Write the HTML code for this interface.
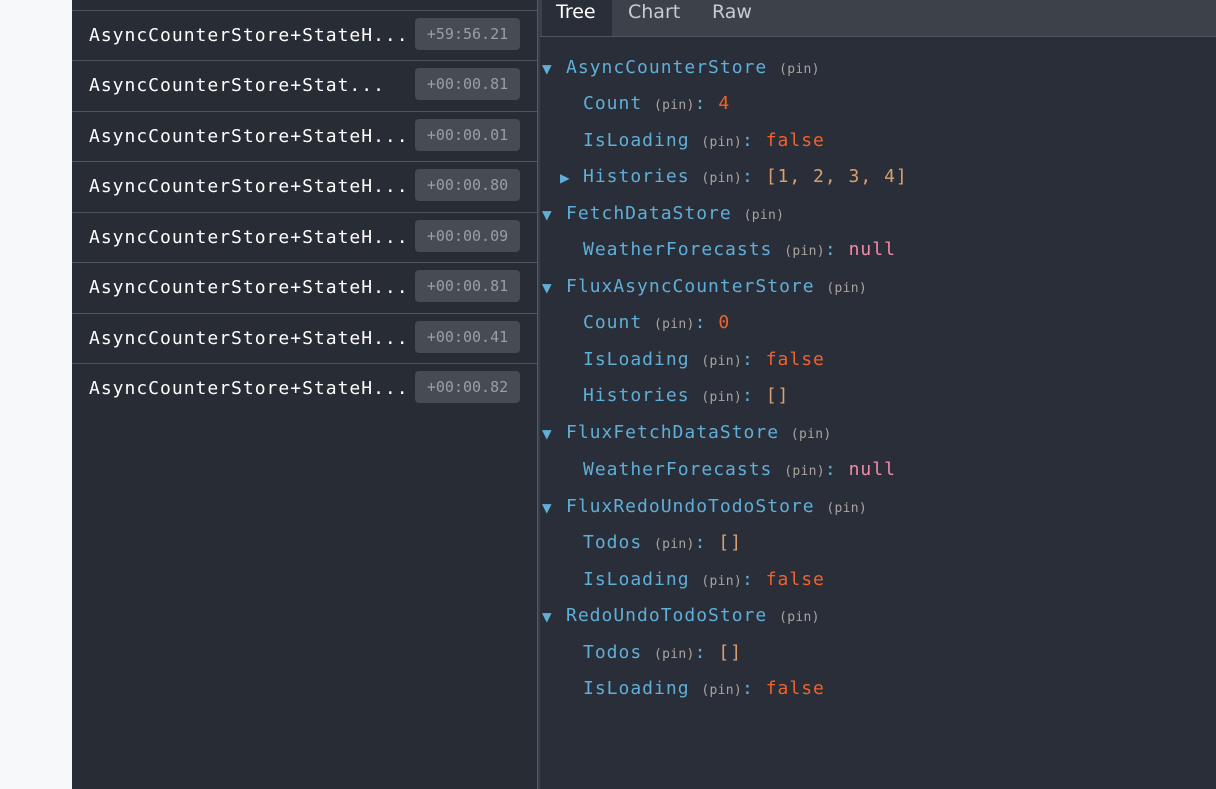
<!DOCTYPE html>
<html><head><style>
*{margin:0;padding:0;box-sizing:border-box}
body{width:1216px;height:789px;overflow:hidden;background:#f7f8fa;position:relative;font-family:"DejaVu Sans Mono","Liberation Mono",monospace}
#left{position:absolute;left:72px;top:0;width:465px;height:789px;background:#282c35}
.row{position:absolute;left:0;width:465px;height:50px;border-top:1px solid #4e535c}
.row .t{position:absolute;left:17px;top:14px;font-size:18px;letter-spacing:1px;color:#fff}
.row .b{position:absolute;left:343px;top:7px;width:105px;height:32px;background:#464b54;border-radius:4px;color:#9a9ea6;font-size:15px;text-align:center;line-height:32px}
#div{position:absolute;left:537px;top:0;width:3px;height:789px;background:#3a3e46;border-left:1px solid #555a63}
#right{position:absolute;left:540px;top:0;width:676px;height:789px;background:#2a2e38}
#tabs{position:absolute;left:0;top:0;width:676px;height:37px;background:#3c414a;border-bottom:1px solid #50555e;font-family:"DejaVu Sans","Liberation Sans",sans-serif;font-size:19px;color:#c8ccd2}
#tabs span{position:absolute;top:1px}
#tree{position:absolute;left:0;top:1px;font-size:18px;letter-spacing:1px}
.l{position:absolute;white-space:nowrap;color:#5fafd9;line-height:20px}
.l small{font-size:13px;letter-spacing:0.3px;color:#a8a4a0}
.o{color:#f0622d}.n{color:#f48aa8}.a{color:#d8a070}
.ar{position:absolute;font-size:16px;color:#5fafd9;line-height:20px}
</style></head><body>
<div id="left">
<div class="row" style="top:10px"><span class="t">AsyncCounterStore+StateH...</span><span class="b">+59:56.21</span></div>
<div class="row" style="top:60px"><span class="t">AsyncCounterStore+Stat...</span><span class="b">+00:00.81</span></div>
<div class="row" style="top:111px"><span class="t">AsyncCounterStore+StateH...</span><span class="b">+00:00.01</span></div>
<div class="row" style="top:161px"><span class="t">AsyncCounterStore+StateH...</span><span class="b">+00:00.80</span></div>
<div class="row" style="top:212px"><span class="t">AsyncCounterStore+StateH...</span><span class="b">+00:00.09</span></div>
<div class="row" style="top:262px"><span class="t">AsyncCounterStore+StateH...</span><span class="b">+00:00.81</span></div>
<div class="row" style="top:313px"><span class="t">AsyncCounterStore+StateH...</span><span class="b">+00:00.41</span></div>
<div class="row" style="top:363px"><span class="t">AsyncCounterStore+StateH...</span><span class="b">+00:00.82</span></div>
</div>
<div id="div"></div>
<div id="right">
<div id="tabs"><div style="position:absolute;left:2px;top:0;width:70px;height:36px;background:#2a2e38"></div><span style="left:16px;color:#fff">Tree</span><span style="left:88px">Chart</span><span style="left:172px">Raw</span></div>
<div id="tree">
<span class="ar" style="left:2px;top:58px">▼</span><div class="l" style="left:26px;top:57px">AsyncCounterStore <small>(pin)</small></div>
<div class="l" style="left:43px;top:93px">Count <small>(pin)</small>: <span class="o">4</span></div>
<div class="l" style="left:43px;top:130px">IsLoading <small>(pin)</small>: <span class="o">false</span></div>
<span class="ar" style="left:20px;top:167px">▶</span><div class="l" style="left:43px;top:166px">Histories <small>(pin)</small>: <span class="a">[1, 2, 3, 4]</span></div>
<span class="ar" style="left:2px;top:204px">▼</span><div class="l" style="left:26px;top:203px">FetchDataStore <small>(pin)</small></div>
<div class="l" style="left:43px;top:239px">WeatherForecasts <small>(pin)</small>: <span class="n">null</span></div>
<span class="ar" style="left:2px;top:277px">▼</span><div class="l" style="left:26px;top:276px">FluxAsyncCounterStore <small>(pin)</small></div>
<div class="l" style="left:43px;top:312px">Count <small>(pin)</small>: <span class="o">0</span></div>
<div class="l" style="left:43px;top:349px">IsLoading <small>(pin)</small>: <span class="o">false</span></div>
<div class="l" style="left:43px;top:385px">Histories <small>(pin)</small>: <span class="a">[]</span></div>
<span class="ar" style="left:2px;top:423px">▼</span><div class="l" style="left:26px;top:422px">FluxFetchDataStore <small>(pin)</small></div>
<div class="l" style="left:43px;top:459px">WeatherForecasts <small>(pin)</small>: <span class="n">null</span></div>
<span class="ar" style="left:2px;top:497px">▼</span><div class="l" style="left:26px;top:496px">FluxRedoUndoTodoStore <small>(pin)</small></div>
<div class="l" style="left:43px;top:532px">Todos <small>(pin)</small>: <span class="a">[]</span></div>
<div class="l" style="left:43px;top:569px">IsLoading <small>(pin)</small>: <span class="o">false</span></div>
<span class="ar" style="left:2px;top:606px">▼</span><div class="l" style="left:26px;top:605px">RedoUndoTodoStore <small>(pin)</small></div>
<div class="l" style="left:43px;top:642px">Todos <small>(pin)</small>: <span class="a">[]</span></div>
<div class="l" style="left:43px;top:678px">IsLoading <small>(pin)</small>: <span class="o">false</span></div>
</div>
</div>
</body></html>
